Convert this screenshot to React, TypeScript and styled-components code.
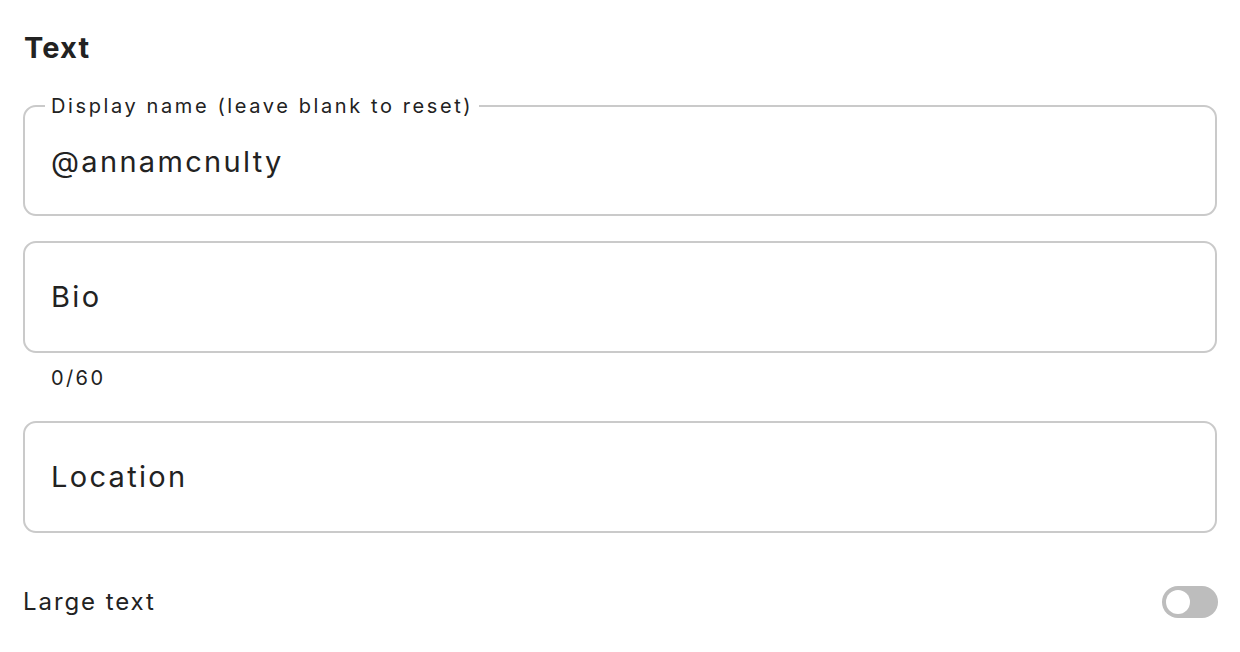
import styled, { createGlobalStyle } from 'styled-components';

const GlobalStyle = createGlobalStyle`
    body {
        margin: 0;
        background: #ffffff;
        font-family: 'Inter', 'Noto Sans', sans-serif;
        color: #222222;
    }
`;

const Page = styled.div`
    padding: 28px 23px 0 23px;
    display: flex;
    flex-direction: column;
`;

const Heading = styled.h2`
    margin: 0 0 27px 1px;
    font-size: 29px;
    line-height: 40px;
    font-weight: 700;
    letter-spacing: 0.04em;
    color: #222222;
`;

const Field = styled.fieldset`
    margin: 0;
    padding: 0 26px 34px 26px;
    border: 2px solid #cacaca;
    border-radius: 13px;
    display: flex;
    flex-direction: column;
`;

const Legend = styled.legend`
    padding: 0 6px;
    margin-left: -6px;
    font-size: 20px;
    line-height: 22px;
    letter-spacing: 0.13em;
    color: #222222;
`;

const Box = styled.div<{ $gap?: number }>`
    height: 112px;
    box-sizing: border-box;
    border: 2px solid #cacaca;
    border-radius: 13px;
    padding: 0 26px;
    display: flex;
    align-items: center;
    margin-top: ${(p) => p.$gap ?? 0}px;
`;

const Value = styled.span<{ $offset?: number }>`
    display: block;
    margin-top: ${(p) => p.$offset ?? 0}px;
    font-size: 29px;
    line-height: 36px;
    letter-spacing: 0.08em;
    color: #222222;
`;

const Counter = styled.div`
    padding-left: 28px;
    margin: 13px 0 31px 0;
    font-size: 20px;
    line-height: 24px;
    letter-spacing: 0.12em;
    color: #222222;
`;

const ToggleRow = styled.div`
    margin-top: 53px;
    display: flex;
    align-items: center;
    justify-content: space-between;
`;

const ToggleLabel = styled.span`
    font-size: 24px;
    line-height: 32px;
    letter-spacing: 0.08em;
    color: #222222;
`;

const Track = styled.div`
    width: 56px;
    height: 32px;
    border-radius: 16px;
    background: #bdbdbd;
    margin-right: -1px;
    display: flex;
    align-items: center;
    padding-left: 4px;
    box-sizing: border-box;
`;

const Knob = styled.div`
    width: 24px;
    height: 24px;
    border-radius: 50%;
    background: #ffffff;
`;

export default function App() {
    return (
        <>
            <GlobalStyle />
            <Page>
                <Heading>Text</Heading>
                <Field>
                    <Legend>Display name (leave blank to reset)</Legend>
                    <Value $offset={27}>@annamcnulty</Value>
                </Field>
                <Box $gap={25}>
                    <Value>Bio</Value>
                </Box>
                <Counter>0/60</Counter>
                <Box>
                    <Value>Location</Value>
                </Box>
                <ToggleRow>
                    <ToggleLabel>Large text</ToggleLabel>
                    <Track>
                        <Knob />
                    </Track>
                </ToggleRow>
            </Page>
        </>
    );
}
